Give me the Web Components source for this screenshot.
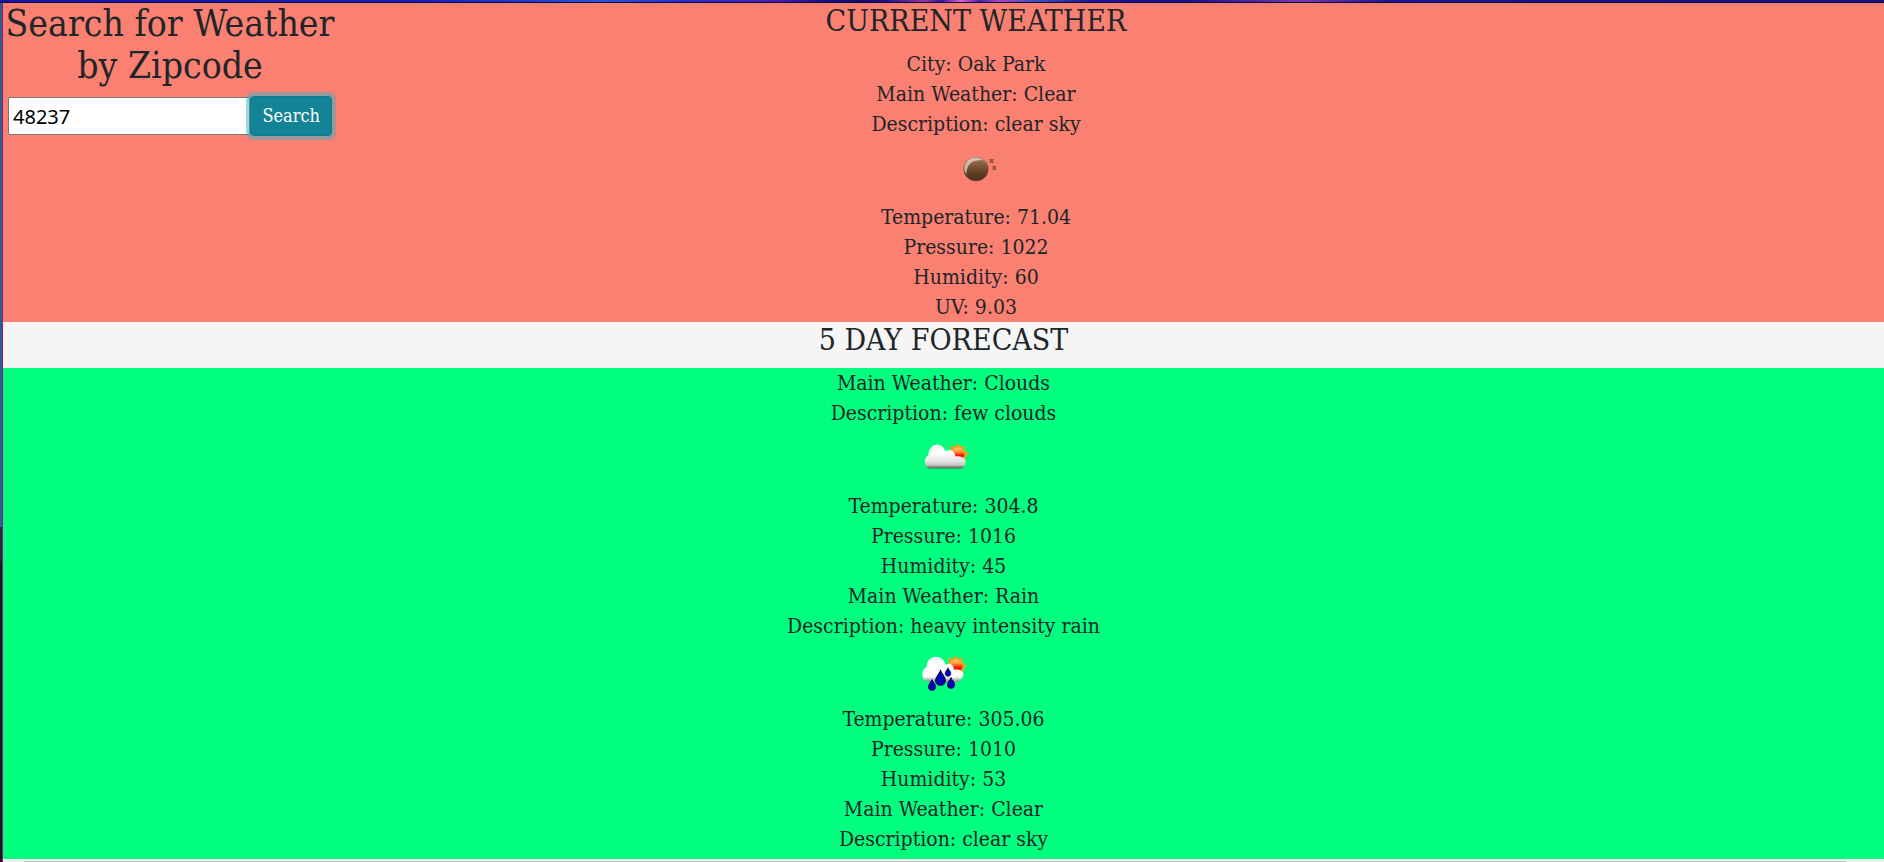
<!DOCTYPE html>
<html lang="en">
<head>
<meta charset="utf-8">
<title>Weather</title>
<style>
  html, body { margin: 0; height: 100%; }
  body {
    overflow: hidden;
    font-family: "DejaVu Serif Condensed", "DejaVu Serif", serif;
    font-size: 21px;
    line-height: 30px;
    color: #212529;
    background: #f5f5f5;
  }
</style>
</head>
<body>
<weather-window>
  <weather-current>
    <zip-search slot="search"></zip-search>
    <weather-details city="Oak Park" main="Clear" description="clear sky" icon="night" temperature="71.04" pressure="1022" humidity="60" uv="9.03"></weather-details>
  </weather-current>
  <forecast-list>
    <weather-details main="Clouds" description="few clouds" icon="cloud" temperature="304.8" pressure="1016" humidity="45"></weather-details>
    <weather-details main="Rain" description="heavy intensity rain" icon="rain" temperature="305.06" pressure="1010" humidity="53"></weather-details>
    <weather-details main="Clear" description="clear sky"></weather-details>
  </forecast-list>
</weather-window>

<script>
const define = (name, html, setup) => customElements.define(name, class extends HTMLElement {
  constructor() {
    super();
    this.attachShadow({ mode: "open" }).innerHTML = html;
  }
  connectedCallback() { if (setup) setup(this, this.shadowRoot); }
});

define("weather-window", `
  <style>
    :host { display: grid; grid-template: 3px minmax(0, 1fr) 3px / 3px minmax(0, 1fr); height: 100vh; }
    .top { grid-column: 1 / -1; box-sizing: border-box; border-bottom: 1px solid #08083a;
      background: linear-gradient(90deg, #1713a4 0, #1a1bbd 22%, #2c4fe0 32%, #2a2fd0 36%, #4c1cb4 41%, #1a0a86 44%, #14086e 46%, #241090 47%, #8c3a9c 49%, #3a149c 50%, #d862d0 51%, #4424a8 52%, #a048b8 53%, #3d4fc0 55%, #1c1496 58%, #190e90 63%, #7a36ac 69%, #1c1496 74%, #1a1080 100%); }
    .side { grid-row: 2 / 4; box-sizing: border-box; border-right: 1px solid #a0108a;
      background: linear-gradient(#2a5f80 0, #31608f 61%, #2c2830 61%, #2c2830 65%, #18191c 65%); }
    main { overflow: hidden; background: #00ff7f; }
    .bar { border-top: 2px solid #f1f1f1; background: #f1f1f1; padding: 0 38px 0 21px; }
    .thumb { height: 1px; background: #c1c1c1; }
  </style>
  <div class="top"></div>
  <div class="side"></div>
  <main><slot></slot></main>
  <div class="bar"><div class="thumb"></div></div>`);

define("weather-current", `
  <style>
    :host { display: grid; grid-template-columns: 334px minmax(0, 1fr) 269px; background: salmon; }
    h2 { margin: 0 0 10px; font-size: 30px; line-height: 36px; font-weight: 400; text-align: center; }
  </style>
  <slot name="search"></slot>
  <section><h2>CURRENT WEATHER</h2><slot></slot></section>`);

define("zip-search", `
  <style>
    :host { display: block; }
    h1 { margin: 0 0 9px; font-size: 37px; line-height: 42px; font-weight: 400; text-align: center; white-space: pre-line; }
    form { display: flex; align-items: center; padding: 0 5px; }
    input { flex: 1; min-width: 0; box-sizing: border-box; height: 38px; padding: 0 4px; border: 1px solid #767676; border-radius: 2px;
      font: 20px "Noto Sans", sans-serif; color: #000; background: #fff; }
    button { height: 40px; padding: 0 11px; border: 1px solid #117a8b; border-radius: 4px; background: #138496; color: #fff;
      font-family: inherit; font-size: 18px; line-height: 28px; box-shadow: 0 0 0 4px rgba(58, 176, 195, .5); }
  </style>
  <h1>Search for Weather by Zipcode</h1>
  <form>
    <input type="text" value="48237" aria-label="Zipcode">
    <button type="button">Search</button>
  </form>`);

define("forecast-list", `
  <style>
    :host { display: block; background: #00ff7f; }
    h2 { margin: 0; padding-bottom: 10px; font-size: 30px; line-height: 36px; font-weight: 400; text-align: center; background: #f5f5f5; }
  </style>
  <h2>5 DAY FORECAST</h2>
  <slot></slot>`);

define("weather-details", `
  <style>
    :host { display: block; text-align: center; }
    p { margin: 0; }
    weather-icon { margin: 7px auto 6px; }
  </style>
  <div></div>`, (el, root) => {
  const rows = [["City", "city"], ["Main Weather", "main"], ["Description", "description"], ["", "icon"],
    ["Temperature", "temperature"], ["Pressure", "pressure"], ["Humidity", "humidity"], ["UV", "uv"]];
  root.querySelector("div").innerHTML = rows.filter(([, key]) => el.hasAttribute(key)).map(([label, key]) =>
    key === "icon" ? `<weather-icon name="${el.getAttribute(key)}"></weather-icon>`
                   : `<p>${label}: ${el.getAttribute(key)}</p>`).join("");
});

const defs = `<defs>
  <linearGradient id="c" x1="0" y1="0" x2="0" y2="1"><stop offset="0" stop-color="#f0f0f0"/><stop offset=".35" stop-color="#fff"/><stop offset=".7" stop-color="#e4e4e4"/><stop offset=".86" stop-color="#c4c4c4"/><stop offset="1" stop-color="#555"/></linearGradient>
  <linearGradient id="w" x1="0" y1="0" x2="0" y2="1"><stop offset="0" stop-color="#f2f2f2"/><stop offset=".3" stop-color="#fff"/><stop offset=".8" stop-color="#f8f8f8"/><stop offset="1" stop-color="#888"/></linearGradient>
  <linearGradient id="s" x1="0" y1="0" x2="0" y2="1"><stop offset="0" stop-color="#ffc38a"/><stop offset=".3" stop-color="#ff9c32"/><stop offset=".6" stop-color="#f10"/><stop offset="1" stop-color="#f21b00"/></linearGradient>
  <linearGradient id="m" x1="0" y1="0" x2="0" y2="1"><stop offset="0" stop-color="#b59a83"/><stop offset=".25" stop-color="#8a6343"/><stop offset=".6" stop-color="#684329"/><stop offset="1" stop-color="#4a2d1c"/></linearGradient>
</defs>`;
const sun = `<path fill="#f9a01b" d="M0-11 2-7 7-8 6-4 11 0 7 2 8 7 3 6 0 9-3 6-8 7-7 2-11 0-7-3-8-8-3-7Z"/><circle r="6.500" fill="url(#s)"/>`;
const drop = (x, y, k) => `<path transform="translate(${x} ${y}) scale(${k})" fill="#0000b4" stroke="#000064" stroke-width="1" d="M0-6C1-3 4-1 4 2A4 4 0 0 1-4 2C-4-1-1-3 0-6Z"/>`;
const icons = {
  night: `<ellipse cx="25" cy="23" rx="12.500" ry="12" fill="url(#m)"/><path d="M13.500 25C12 14 22 9 32 14C23 14 16 16 15.500 28Z" fill="#e6d8cb" opacity=".75"/><path d="M38 13H43L42 15 43 17H38L39 15ZM41 20H45V24H41L42 22Z" fill="#96583f"/>`,
  cloud: `<g transform="translate(39 19)">${sun}</g><path fill="url(#c)" d="M10 33.500A7 7.500 0 0 1 9.500 20C9.500 11 17 7.500 22 10.500Q25 12 26 16C33 13 36 17 36.500 21.500C44 20.500 48 25 46 30Q45 33.500 41 33.500Z"/>`,
  rain: `<g transform="translate(37 18)">${sun}</g><path fill="url(#w)" d="M9 34A7.500 8 0 0 1 7.500 19C8 10 15 7 21 9.500Q26 12 26 17C31 14 35 17 35 22C42 20 47 25 43 30Q41 34 37 34Z"/>${drop(21.500, 30, 1.2)}${drop(29, 24, .7)}${drop(13, 37, .9)}${drop(32, 35, .9)}`
};
define("weather-icon", `
  <style>:host, svg { display: block; width: 50px; height: 50px; }</style>
  <svg viewBox="0 0 50 50" aria-hidden="true"></svg>`, (el, root) => {
  root.querySelector("svg").innerHTML = defs + (icons[el.getAttribute("name")] || "");
});
</script>
</body>
</html>
